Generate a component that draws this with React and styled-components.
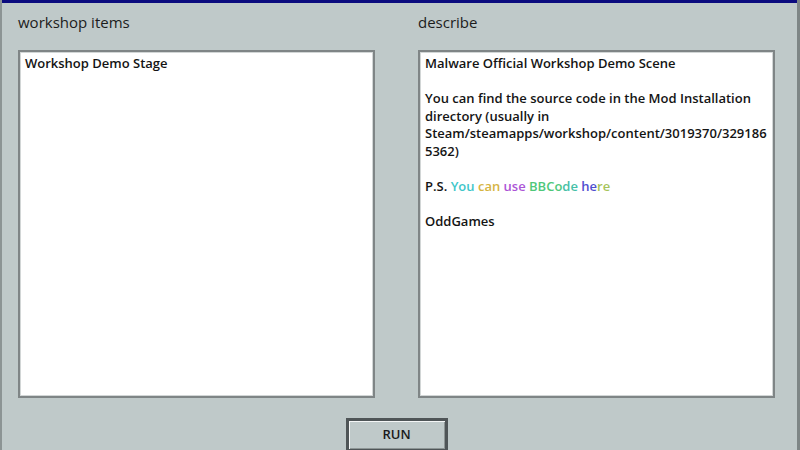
import React from "react";
import styled, { createGlobalStyle } from "styled-components";

const Global = createGlobalStyle`
  html, body { margin: 0; padding: 0; background: #bfc9c9; }
  body { font-family: "Open Sans", "Noto Sans", sans-serif; }
`;

const Window = styled.div`
  width: 800px;
  height: 450px;
  box-sizing: border-box;
  background: #bfc9c9;
  border-left: 2px solid #8c9494;
  border-right: 3px solid #7e8686;
  display: flex;
  flex-direction: column;
  overflow: hidden;
`;

const TitleStrip = styled.div`
  height: 3px;
  background: #0b0b7e;
  flex: none;
`;

const Body = styled.div`
  padding: 9px 0 0 16px;
  display: flex;
  flex-direction: column;
`;

const Columns = styled.div`
  display: grid;
  grid-template-columns: 357px 357px;
  column-gap: 43px;
`;

const Column = styled.div`
  display: flex;
  flex-direction: column;
`;

const Label = styled.div`
  font-size: 15px;
  line-height: 20px;
  height: 20px;
  color: #1c1c1c;
  margin-bottom: 18px;
  padding-top: 1px;
  margin-top: -1px;
  font-weight: 500;
`;

const Box = styled.div`
  height: 348px;
  box-sizing: border-box;
  background: #ffffff;
  border: 2px solid #7f8586;
  box-shadow: inset 0 0 0 1px #d2d6d6;
  padding: 3px 6px 0 5px;
  font-size: 13px;
  line-height: 17.5px;
  color: #141414;
  font-weight: 600;
  overflow-wrap: anywhere;
`;

const ListItem = styled.div``;

const Para = styled.p`
  margin: 0 0 17.5px 0;
`;

const Tint = styled.span`
  color: ${(p) => p.$c};
`;

const Footer = styled.div`
  width: 757px;
  display: flex;
  justify-content: center;
  padding-top: 20px;
`;

const RunButton = styled.button`
  width: 102px;
  height: 34px;
  box-sizing: border-box;
  background: #bfc9c9;
  border: 3px solid #4f5557;
  box-shadow: inset 1px 1px 0 #f4f6f6, inset -1px -1px 0 #8d9595;
  font-family: "Open Sans", "Noto Sans", sans-serif;
  font-size: 13px;
  font-weight: 600;
  color: #1a1a1a;
  padding: 0 0 2px 0;
  margin-left: 0;
`;

export default function App() {
  return (
    <>
      <Global />
      <Window>
        <TitleStrip />
        <Body>
          <Columns>
            <Column>
              <Label>workshop items</Label>
              <Box>
                <ListItem>Workshop Demo Stage</ListItem>
              </Box>
            </Column>
            <Column>
              <Label>describe</Label>
              <Box>
                <Para>Malware Official Workshop Demo Scene</Para>
                <Para>
                  You can find the source code in the Mod Installation directory (usually in
                  Steam/steamapps/workshop/content/3019370/3291865362)
                </Para>
                <Para>
                  P.S. <Tint $c="#3ec6c9">You</Tint> <Tint $c="#d6b443">can</Tint>{" "}
                  <Tint $c="#ac55d6">use</Tint> <Tint $c="#4fc87a">BBCo</Tint>
                  <Tint $c="#45c0a8">de</Tint> <Tint $c="#4f4fcf">he</Tint>
                  <Tint $c="#a6c45a">re</Tint>
                </Para>
                <Para>OddGames</Para>
              </Box>
            </Column>
          </Columns>
          <Footer>
            <RunButton>RUN</RunButton>
          </Footer>
        </Body>
      </Window>
    </>
  );
}
